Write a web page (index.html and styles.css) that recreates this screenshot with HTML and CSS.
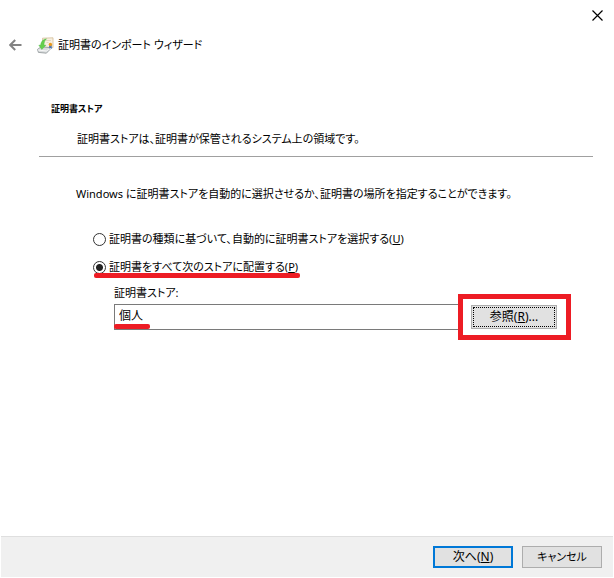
FILE: index.html
```html
<!DOCTYPE html>
<html lang="ja">
<head>
<meta charset="utf-8">
<title>証明書のインポート ウィザード</title>
<link rel="stylesheet" href="styles.css">
</head>
<body>
<form class="wizard">
  <div class="caption">
    <button type="button" class="icon-button" aria-label="閉じる">
      <svg width="11" height="11" viewBox="0 0 11 11"><path d="M.5.5l10 10M10.5.5l-10 10" stroke="#000" stroke-width="1.2" fill="none"/></svg>
    </button>
  </div>
  <header class="title-row">
    <button type="button" class="icon-button" aria-label="戻る">
      <svg width="13" height="12" viewBox="0 0 13 12"><path d="M6.2 1L1.2 6l5 5M1.2 6H12.5" stroke="#838383" stroke-width="2" fill="none"/></svg>
    </button>
    <svg class="cert-icon" width="17" height="17" viewBox="0 0 17 17">
      <path d="M5.5 1.200L16 .8v9.800l-10.500.2z" fill="#f7efdf" stroke="#d3bd97" stroke-width=".8"/>
      <path d="M9 3.500h5M9.500 5.500h2" stroke="#dccfb8" stroke-width=".8"/>
      <path d="M12.300 8l-.5 4 1.500-1 1.600 1-.3-4z" fill="#4775b8"/>
      <circle cx="13.400" cy="7.500" r="1.700" fill="#e99a20"/>
      <path d="M.5 12.400L4 9.800l8 .7 1.200 1.700-3.800 4-8-.8z" fill="#d9dcdd" stroke="#8f9698" stroke-width=".8"/>
      <path d="M1 13l8.300 1 3.400-2" stroke="#fff" stroke-width=".8" fill="none"/>
      <path d="M9.500 1.800C6 2.300 3.800 4.800 3.700 8L1.800 8.300l3 4.200 4.200-4.300-2-.1c0-2.600.8-4.500 2.500-6.300z" fill="#64cf4c" stroke="#4fb848" stroke-width=".4"/>
    </svg>
    <h1 class="title">証明書のインポート ウィザード</h1>
  </header>
  <section class="intro">
    <h2 class="heading">証明書ストア</h2>
    <p class="summary">証明書ストアは、証明書が保管されるシステム上の領域です。</p>
  </section>
  <main class="content">
    <p class="prompt">Windows に証明書ストアを自動的に選択させるか、証明書の場所を指定することができます。</p>
    <div class="options">
      <label class="option"><input class="radio" type="radio" name="store-mode"><span>証明書の種類に基づいて、自動的に証明書ストアを選択する(<u>U</u>)</span></label>
      <label class="option marked"><input class="radio" type="radio" name="store-mode" checked><span>証明書をすべて次のストアに配置する(<u>P</u>)</span></label>
      <div class="store">
        <label class="store-label" for="store">証明書ストア:</label>
        <div class="store-row">
          <div class="field marked"><input class="store-input" id="store" type="text" value="個人" readonly></div>
          <div class="highlight"><button type="button" class="button browse">参照(<u>R</u>)...</button></div>
        </div>
      </div>
    </div>
  </main>
  <footer class="footer">
    <button type="submit" class="button primary">次へ(<u>N</u>)</button>
    <button type="button" class="button cancel">キャンセル</button>
  </footer>
</form>
</body>
</html>
```
FILE: styles.css
```css
* { box-sizing: border-box; }

body {
  margin: 0;
  background: #fff;
  color: #000;
  font: 11px/18px "Noto Sans", "Noto Sans CJK JP", sans-serif;
  font-feature-settings: "palt", "kern";
}

h1, h2, p { margin: 0; font-size: inherit; font-weight: 400; }

button, input { font: inherit; font-feature-settings: inherit; color: inherit; }

.wizard {
  display: flex;
  flex-direction: column;
  min-height: 100vh;
  padding: 0 1px 1px;
}

.caption {
  display: flex;
  justify-content: flex-end;
  height: 30px;
  padding-right: 10px;
}

.icon-button {
  display: flex;
  align-items: center;
  padding: 0;
  border: 0;
  background: none;
}

.title-row {
  display: flex;
  align-items: center;
  height: 30px;
  padding-left: 8px;
}

.cert-icon { margin: 0 4px 0 15px; }

.intro {
  margin: 40px 20px 0 38px;
  padding: 0 12px 8px;
  border-bottom: 1px solid #a0a0a0;
}

.heading { font-size: 9px; font-weight: 700; }

.summary { margin-top: 12px; padding-left: 26px; }

.content {
  flex: 1;
  padding: 28px 42px 24px 75px;
}

.options {
  display: flex;
  flex-direction: column;
  align-items: flex-start;
  padding: 27px 0 0 17px;
}

.option {
  position: relative;
  display: flex;
  align-items: center;
  margin-bottom: 10px;
}

.radio {
  appearance: none;
  width: 13px;
  height: 13px;
  margin: 0 3px 0 0;
  border: 1px solid #333;
  border-radius: 50%;
  background: #fff;
}

.radio:checked { background: radial-gradient(circle, #222 3px, #fff 4px); }

.marked::after {
  content: "";
  position: absolute;
  height: 5px;
  border-radius: 2px;
  background: #ed1c24;
}

.option.marked { margin-bottom: 8px; }

.option.marked::after { left: 1px; right: -2px; top: 15px; }

.store { align-self: stretch; padding-left: 21px; }

.store-label { display: block; }

.store-row { display: flex; align-items: center; margin-top: -8px; }

.field { position: relative; flex: 1; min-width: 0; }

.field::after { left: 0; bottom: 1px; width: 36px; }

.store-input {
  display: block;
  width: 100%;
  height: 26px;
  padding: 0 4px 4px;
  border: 1px solid #7a7a7a;
  border-right: 0;
  border-radius: 0;
  outline: 0;
  background: #fff;
  font-size: 12px;
}

.highlight {
  padding: 6px 9px 6px 8px;
  border: 5px solid #ed1c24;
  background: #fff;
}

.button {
  width: 80px;
  height: 22px;
  padding: 0;
  border: 1px solid #adadad;
  border-radius: 0;
  background: #e1e1e1;
  font-size: 12px;
  line-height: 18px;
}

.browse {
  width: 86px;
  height: 24px;
  outline: 1px dotted #000;
  outline-offset: -3px;
}

.primary { border: 2px solid #0078d7; }

.cancel { font-size: 11px; }

.footer {
  display: flex;
  justify-content: flex-end;
  gap: 9px;
  padding: 9px 11px;
  border-top: 1px solid #dfdfdf;
  background: #f0f0f0;
}
```
